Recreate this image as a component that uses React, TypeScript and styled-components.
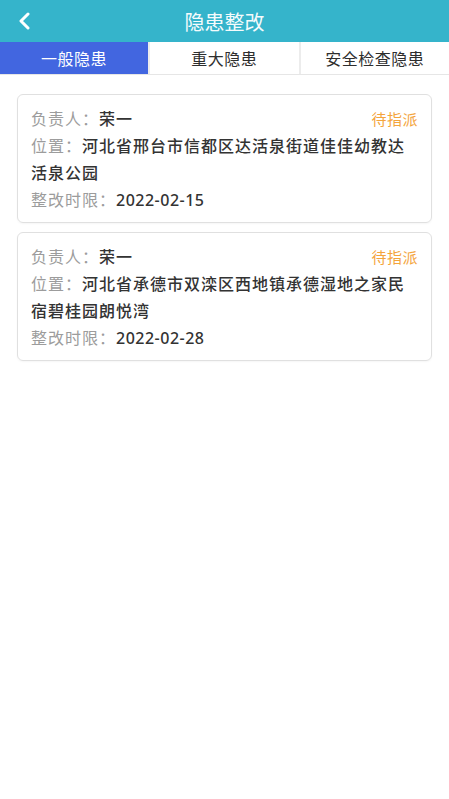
import React, { useState } from 'react';
import styled, { createGlobalStyle } from 'styled-components';

const GlobalStyle = createGlobalStyle`
  html, body {
    margin: 0;
    padding: 0;
    background: #ffffff;
  }
  body {
    font-family: "Noto Sans CJK SC", "Noto Sans", sans-serif;
  }
`;

const Page = styled.div`
  width: 449px;
  min-height: 799px;
  background: #ffffff;
`;

const Header = styled.header`
  height: 42px;
  background: #35b4cb;
  display: flex;
  align-items: center;
  justify-content: center;
  position: relative;
`;

const BackButton = styled.button`
  position: absolute;
  left: 12px;
  top: 8px;
  width: 24px;
  height: 26px;
  border: none;
  background: transparent;
  padding: 0;
  display: flex;
  align-items: center;
  justify-content: center;
`;

const Title = styled.h1`
  margin: 0;
  font-size: 20px;
  font-weight: 400;
  color: #f4fbfc;
`;

const TabBar = styled.nav`
  display: grid;
  grid-template-columns: 148px 1fr 1fr;
  column-gap: 2px;
  background: #ececec;
  border-bottom: 1px solid #e6e6e6;
`;

const Tab = styled.div<{ $active?: boolean }>`
  height: 32px;
  display: flex;
  align-items: center;
  justify-content: center;
  font-size: 16px;
  letter-spacing: 0.5px;
  color: ${p => (p.$active ? '#ffffff' : '#2e2e2e')};
  background: ${p => (p.$active ? '#4266e0' : '#ffffff')};
`;

const List = styled.main`
  display: flex;
  flex-direction: column;
  gap: 9px;
  padding: 19px 17px 0 17px;
`;

const Card = styled.section`
  border: 1px solid #e0e0e0;
  border-radius: 6px;
  padding: 10px 13px 8px 13px;
  box-shadow: 0 1px 2px rgba(0, 0, 0, 0.04);
`;

const Row = styled.div`
  display: flex;
  align-items: baseline;
  justify-content: space-between;
`;

const Line = styled.p`
  margin: 0;
  font-size: 16px;
  line-height: 27px;
  letter-spacing: 1px;
  color: #333333;
`;

const Label = styled.span`
  color: #9c9c9c;
  font-weight: 400;
`;

const Value = styled.span`
  color: #333333;
  font-weight: 500;
`;

const Status = styled.span`
  font-size: 15px;
  line-height: 27px;
  color: #f4a43c;
  letter-spacing: 0.5px;
`;

const Date = styled.span`
  font-family: "Noto Sans", "Open Sans", sans-serif;
  font-weight: 500;
  color: #333333;
  letter-spacing: 0.5px;
`;

type Hazard = {
  owner: string;
  address: string;
  deadline: string;
  status: string;
};

const hazards: Hazard[] = [
  {
    owner: '荣一',
    address: '河北省邢台市信都区达活泉街道佳佳幼教达活泉公园',
    deadline: '2022-02-15',
    status: '待指派',
  },
  {
    owner: '荣一',
    address: '河北省承德市双滦区西地镇承德湿地之家民宿碧桂园朗悦湾',
    deadline: '2022-02-28',
    status: '待指派',
  },
];

const tabs = ['一般隐患', '重大隐患', '安全检查隐患'];

const BackIcon = () => (
  <svg width="14" height="18" viewBox="0 0 14 18">
    <path d="M11 2 L4 9 L11 16" fill="none" stroke="#ffffff" strokeWidth="3" strokeLinecap="round" strokeLinejoin="round" />
  </svg>
);

const HazardCard = ({ item }: { item: Hazard }) => (
  <Card>
    <Row>
      <Line>
        <Label>负责人：</Label>
        <Value>{item.owner}</Value>
      </Line>
      <Status>{item.status}</Status>
    </Row>
    <Line>
      <Label>位置：</Label>
      <Value>{item.address}</Value>
    </Line>
    <Line>
      <Label>整改时限：</Label>
      <Date>{item.deadline}</Date>
    </Line>
  </Card>
);

export default function App() {
  const [active, setActive] = useState(0);
  return (
    <Page>
      <GlobalStyle />
      <Header>
        <BackButton aria-label="返回">
          <BackIcon />
        </BackButton>
        <Title>隐患整改</Title>
      </Header>
      <TabBar>
        {tabs.map((t, i) => (
          <Tab key={t} $active={i === active} onClick={() => setActive(i)}>
            {t}
          </Tab>
        ))}
      </TabBar>
      <List>
        {hazards.map((h, i) => (
          <HazardCard key={i} item={h} />
        ))}
      </List>
    </Page>
  );
}
